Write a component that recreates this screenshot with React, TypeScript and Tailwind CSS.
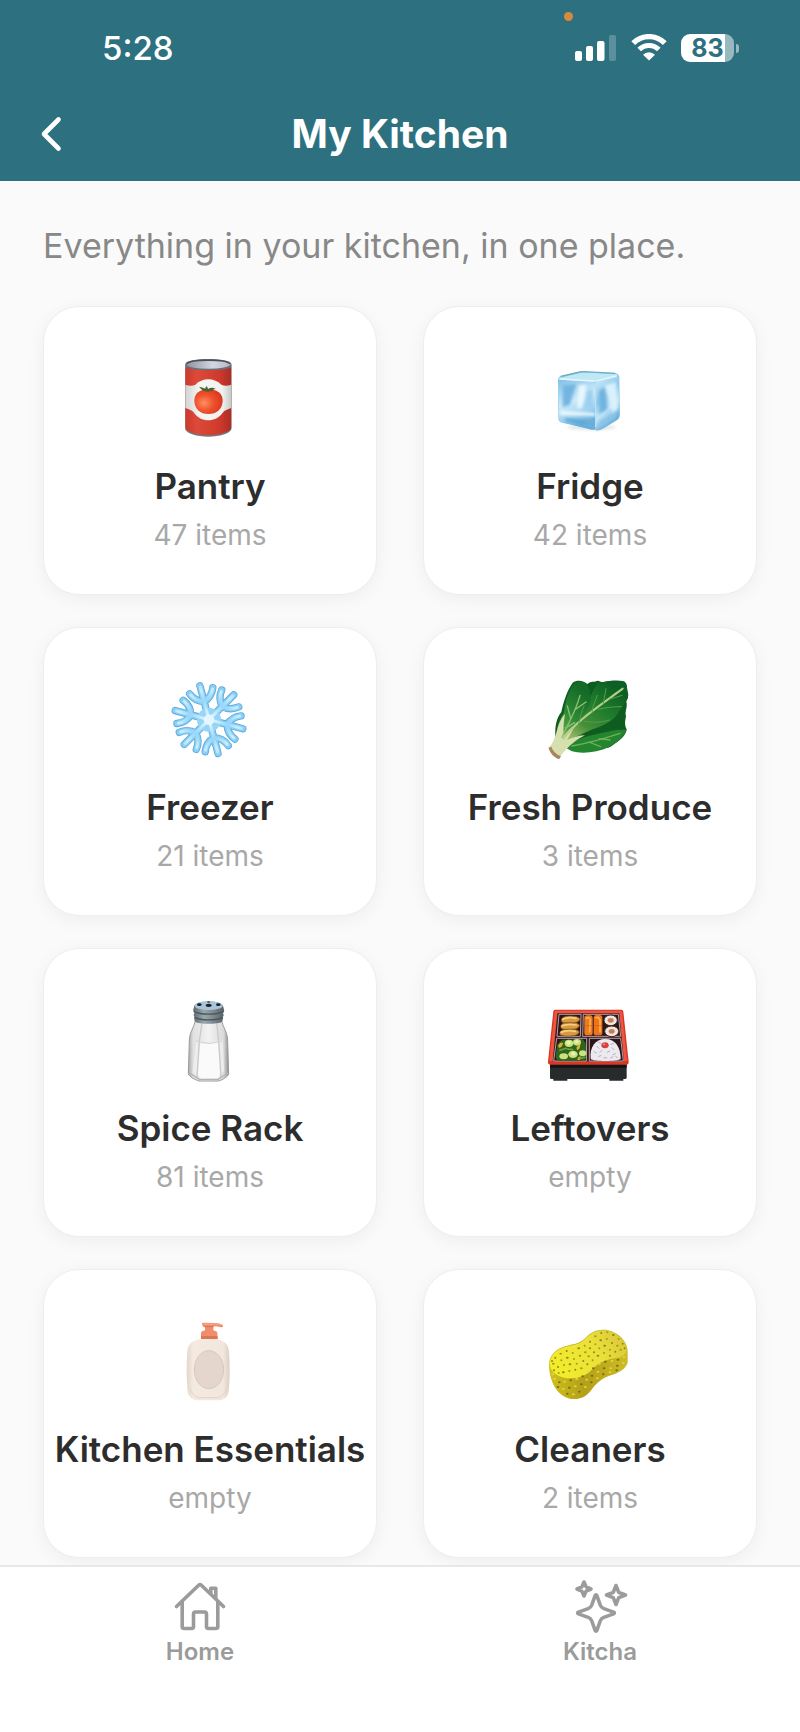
import type { ReactNode } from 'react'

type Category = {
  name: string
  count: string
  icon: ReactNode
}

function CanIcon() {
  return (
    <svg viewBox="-7 3 288 288" className="size-24" aria-hidden="true">
      <defs>
        <linearGradient id="canRed" x1="0" x2="1">
          <stop offset="0" stopColor="#c93a2e" />
          <stop offset="0.25" stopColor="#dd4a38" />
          <stop offset="0.75" stopColor="#cf392c" />
          <stop offset="1" stopColor="#a92e26" />
        </linearGradient>
        <linearGradient id="canLabel" x1="0" x2="1">
          <stop offset="0" stopColor="#cfd3d2" />
          <stop offset="0.3" stopColor="#f6f6f4" />
          <stop offset="0.8" stopColor="#f1f2f0" />
          <stop offset="1" stopColor="#c2c9c7" />
        </linearGradient>
        <linearGradient id="canLid" x1="0" x2="1">
          <stop offset="0" stopColor="#8f939e" />
          <stop offset="0.6" stopColor="#d3d7e2" />
          <stop offset="1" stopColor="#b5b9c6" />
        </linearGradient>
        <radialGradient id="tomato" cx="0.35" cy="0.55" r="0.7">
          <stop offset="0" stopColor="#ff9161" />
          <stop offset="0.45" stopColor="#f0532f" />
          <stop offset="1" stopColor="#d5331c" />
        </radialGradient>
      </defs>
      <path d="M63 42v196c4 13 34 22 69 22s65-9 69-22V42z" fill="#77747c" />
      <path d="M63 50v184c6 13 35 21 69 21s63-8 69-21V50c-10 12-128 12-138 0z" fill="url(#canRed)" />
      <path d="M63 104c14 5 22 4 30 0 20-22 58-22 78 0 8 4 18 4 30 0v70c-12 5-20 6-26 14-20 30-66 30-86 0-6-8-14-9-26-14z" fill="url(#canLabel)" />
      <path d="M90 152c0-22 16-34 42-34s43 12 43 34c0 24-18 40-43 40-24 0-42-16-42-40z" fill="url(#tomato)" />
      <path d="M133 126c-10-1-18-4-22-8l-7-8c9 2 14 4 19 6 0-4 2-6 5-7l3 8c8-4 15-5 23 0-7 1-11 4-13 8l-6-4z" fill="#47652b" />
      <path d="M63 42c0-20 138-20 138 0v8c-8 14-130 14-138 0z" fill="#6c6f79" />
      <ellipse cx="132" cy="43" rx="66" ry="13" fill="url(#canLid)" />
      <path d="M68 42c8-15 120-15 128 0" fill="none" stroke="#4b4e58" strokeWidth="4" />
    </svg>
  )
}

function IceIcon() {
  return (
    <svg viewBox="6 3 288 288" className="size-24" aria-hidden="true">
      <defs>
        <linearGradient id="iceLeft" x1="0" y1="0" x2="0.3" y2="1">
          <stop offset="0" stopColor="#7fc0e8" />
          <stop offset="0.5" stopColor="#cfeafa" />
          <stop offset="0.75" stopColor="#a3d5f2" />
          <stop offset="1" stopColor="#6aaedb" />
        </linearGradient>
        <linearGradient id="iceRight" x1="0" y1="0" x2="0.4" y2="1">
          <stop offset="0" stopColor="#d6effb" />
          <stop offset="0.45" stopColor="#8cc8eb" />
          <stop offset="0.7" stopColor="#c2e5f7" />
          <stop offset="1" stopColor="#5fa5d3" />
        </linearGradient>
        <filter id="iceBlur" x="-30%" y="-30%" width="160%" height="160%">
          <feGaussianBlur stdDeviation="4" />
        </filter>
      </defs>
      <ellipse cx="155" cy="232" rx="74" ry="9" fill="#e4e8ea" filter="url(#iceBlur)" />
      <path d="M54 90q0-9 9-12l52-12q6-2 14-1l96 4q12 2 13 13l2 112q0 10-8 16l-44 27q-8 5-18 4L66 218q-11-2-11-13z" fill="#8fcaec" />
      <path d="M56 88l102 5q8 2 8 10v134q-5 3-12 2L66 217q-9-2-9-12z" fill="url(#iceLeft)" />
      <path d="M166 100q2-6 12-8l50-13q8 1 8 10l2 106q0 8-6 13l-46 29q-9 5-20 4z" fill="url(#iceRight)" />
      <path d="M60 84l60-16q6-2 12-1l96 6q8 3 0 6l-50 13q-8 3-16 2L66 89q-10-1-6-5z" fill="#bfe8f5" />
      <g filter="url(#iceBlur)">
        <path d="M68 106l40-4-18 62-22 8z" fill="#73b5e0" />
        <path d="M116 106l24-2-14 68-14 6z" fill="#e9f7fe" />
        <path d="M60 182l106 7v9l-106-4z" fill="#eefaff" />
        <path d="M74 204l72 8-20 14-48-12z" fill="#5fa8d5" />
        <path d="M194 106l34-10 6 78-16 16z" fill="#d9f1fc" />
        <path d="M178 122l18-10 6 66-24 14z" fill="#6fb4df" />
        <path d="M180 214l50-24-2 14-46 28z" fill="#85c4e8" />
        <path d="M140 122l18-4v56l-26 2z" fill="#9bd0ef" />
      </g>
      <path d="M58 87l102 6q8 1 16-2l54-13" fill="none" stroke="#e6f8fd" strokeWidth="4" />
      <path d="M62 79l58-13q6-1 12-1l94 5" fill="none" stroke="#6faac4" strokeWidth="4" />
      <path d="M167 100v132" stroke="#b9e0f4" strokeWidth="4" />
    </svg>
  )
}

const ARMS = [-15, 45, 105, 165, 225, 285]
const ARM_PATH = 'M0 0V-105M0-56Q-26-64-36-90M0-56Q26-64 36-90'

function SnowflakeIcon() {
  return (
    <svg viewBox="37 36 288 288" className="size-24" aria-hidden="true">
      <defs>
        <radialGradient id="flake" gradientUnits="userSpaceOnUse" cx="0" cy="0" r="118">
          <stop offset="0" stopColor="#f1fbff" />
          <stop offset="0.25" stopColor="#c3eafd" />
          <stop offset="0.5" stopColor="#97d6f9" />
          <stop offset="0.75" stopColor="#caedfd" />
          <stop offset="1" stopColor="#a9def9" />
        </radialGradient>
      </defs>
      <g transform="translate(178 179)" fill="none" strokeLinecap="round" strokeLinejoin="round">
        {ARMS.map(a => (
          <path key={a} d={ARM_PATH} transform={`rotate(${a})`} stroke="#5fa9d8" strokeWidth="22" />
        ))}
        {ARMS.map(a => (
          <path key={a} d={ARM_PATH} transform={`rotate(${a})`} stroke="#89cff7" strokeWidth="17" />
        ))}
        <circle r="36" fill="#97d5f8" />
        {ARMS.map(a => (
          <path key={a} d="M0 0V-101M0-56Q-24-64-34-86M0-56Q24-64 34-86" transform={`rotate(${a})`} stroke="url(#flake)" strokeWidth="9" />
        ))}
        <circle r="16" fill="#e4f6ff" />
      </g>
    </svg>
  )
}

function LeafIcon() {
  return (
    <svg viewBox="36 36 288 288" className="size-24" aria-hidden="true">
      <defs>
        <linearGradient id="leaf" x1="0.1" y1="0.9" x2="0.8" y2="0.1">
          <stop offset="0" stopColor="#a3bd6c" />
          <stop offset="0.3" stopColor="#458f38" />
          <stop offset="0.65" stopColor="#1f7c2d" />
          <stop offset="1" stopColor="#0d6023" />
        </linearGradient>
        <linearGradient id="leafSide" x1="0" y1="1" x2="0.5" y2="0">
          <stop offset="0" stopColor="#7fb554" />
          <stop offset="0.5" stopColor="#2c8a35" />
          <stop offset="1" stopColor="#136b27" />
        </linearGradient>
      </defs>
      <path d="M78 240c-6-30 0-66 16-84 6-30 18-66 34-88 14-10 34-6 44 4 12-10 20-4 26-8 8-6 14 4 22 2 18-4 44-6 62-2 12 8 8 22 12 34 4 16-8 20-4 32 2 14-6 26-2 38-2 14-6 24 2 40-2 20-24 36-40 46-12 12-30 10-44 14-24 12-56 6-78 4z" fill="#0e5c20" />
      <path d="M92 252c20-52 50-86 78-112 8-24 22-56 34-72 26-4 64-4 84 2 4 14 4 32 6 44-10 18-20 30-30 46-16 26-46 38-76 48-30 12-60 30-96 44z" fill="url(#leaf)" />
      <path d="M80 238c-4-32 10-60 22-80 4-34 14-68 32-88 14-8 32-6 42 12 10 22 8 50-6 70-18 28-44 52-68 84z" fill="url(#leafSide)" />
      <path d="M104 262c30-26 74-34 106-42 26-6 54-14 80-10-12 24-32 40-52 50-36 18-82 22-112 14z" fill="#23852f" />
      <path d="M55 264c14-12 20-32 26-52 8-30 18-44 24-50-4 24-6 44-4 66 10-14 20-24 34-34-8 20-18 34-24 46 22-8 38-14 54-14-20 10-48 28-76 66-10 6-28-10-34-28z" fill="#d5e0ae" />
      <path d="M100 236c36-50 96-90 178-150" fill="none" stroke="#b4cf88" strokeWidth="6" strokeLinecap="round" />
      <path d="M96 232c18-42 40-74 54-126M122 176l-10-38M136 148l32-22M106 204l28-16" fill="none" stroke="#8fc070" strokeWidth="4" strokeLinecap="round" />
      <path d="M146 190c6-20 8-34 16-52M186 156c2-20 10-32 16-50M220 130l8-44M162 184c28 4 52 4 76-4M204 148c24-6 48-8 70-8M238 118l38-12" fill="none" stroke="#559e4b" strokeWidth="3" strokeLinecap="round" />
      <path d="M126 258c44-8 96-22 144-38M176 246l36 14M208 236l32 4" fill="none" stroke="#6fb157" strokeWidth="4" strokeLinecap="round" />
      <path d="M56 263c4 16 18 32 32 34l5-9c-14-4-25-16-29-28z" fill="#a8855b" />
    </svg>
  )
}

function ShakerIcon() {
  return (
    <svg viewBox="38 36 288 288" className="size-24" aria-hidden="true">
      <defs>
        <linearGradient id="glass" x1="0" x2="1">
          <stop offset="0" stopColor="#a9a9a9" />
          <stop offset="0.12" stopColor="#e0e0e0" />
          <stop offset="0.5" stopColor="#f2f2f2" />
          <stop offset="0.88" stopColor="#d9d9d9" />
          <stop offset="1" stopColor="#8d8d8d" />
        </linearGradient>
        <linearGradient id="cap" x1="0" x2="1">
          <stop offset="0" stopColor="#606b70" />
          <stop offset="0.35" stopColor="#9aa7ab" />
          <stop offset="0.65" stopColor="#7d898e" />
          <stop offset="1" stopColor="#556066" />
        </linearGradient>
      </defs>
      <path d="M138 118c-4 22-18 36-18 62l-3 98c0 8 24 20 32 22h58c10-2 31-14 31-22l-3-98c0-26-14-40-18-62z" fill="url(#glass)" stroke="#9b9b9b" strokeWidth="3" />
      <path d="M140 182l80-4 4 90-16 26h-52l-26-18z" fill="#ededec" />
      <path d="M152 190l-8 88 12 16 50-2 8-20-8-86z" fill="#fafafa" />
      <path d="M158 126l-8 54-7 110M202 126l6 54 7 108" fill="none" stroke="#c9c9c9" strokeWidth="4" />
      <path d="M140 180l40 8 38-8" fill="none" stroke="#d3d3d3" strokeWidth="3" />
      <path d="M120 276l30 19h56l30-19" fill="none" stroke="#b3b3b3" strokeWidth="4" />
      <path d="M134 78c0-22 88-22 88 0l2 8c2 6-2 8-4 10 4 4 4 8 0 12 2 6 0 10-2 14-12 8-68 8-80 0-3-4-4-8-2-14-4-4-4-8 0-12-3-3-5-6-4-11z" fill="url(#cap)" />
      <path d="M134 92c20 10 68 10 88 0M135 109c20 10 66 10 86 0" fill="none" stroke="#4c575d" strokeWidth="4" />
      <ellipse cx="178" cy="74" rx="42" ry="13" fill="#a9c3d9" />
      <ellipse cx="178" cy="73" rx="9" ry="5" fill="#16232d" />
      <ellipse cx="150" cy="71" rx="7" ry="4" fill="#16232d" />
      <ellipse cx="207" cy="71" rx="7" ry="4" fill="#16232d" />
      <ellipse cx="178" cy="63" rx="5" ry="2" fill="#2c3c48" />
    </svg>
  )
}

function BentoIcon() {
  return (
    <svg viewBox="36 6 288 288" className="size-24" aria-hidden="true">
      <path d="M60 214h230v46q0 4-5 4h-5v5h-42v-5H112v5H70v-5h-6q-4 0-4-4z" fill="#272b2c" />
      <path d="M60 218h230v12H60z" fill="#121415" />
      <path d="M74 56h200q5 0 6 6l16 150q1 9-8 9H62q-9 0-8-9L70 61q1-5 4-5z" fill="#d93726" />
      <path d="M77 59h194q4 0 5 5l15 146H58L74 63q1-4 3-4z" fill="#ee5540" />
      <path d="M82 67h186l14 144H68z" fill="#3b1c1c" />
      <path d="M87 70h66l-2 66H81zM160 70h105l7 66H158zM80 142h90l-1 68H71zM178 142h94l8 68H178z" fill="#2c1516" stroke="#b3a0a8" strokeWidth="3" strokeLinejoin="round" />
      <g fill="#d79a42" stroke="#8c551b" strokeWidth="2">
        <path d="M94 89q0-14 26-14t30 9q-4 13-30 13-26 0-26-8zM92 108q0-14 26-14t31 9q-4 13-31 13-26 0-26-8zM89 128q0-14 28-14t31 9q-4 12-31 12-28 0-28-7z" />
      </g>
      <path d="M98 85q16-8 40-3M96 105q16-8 42-3M94 124q16-8 42-3" fill="none" stroke="#f4d07b" strokeWidth="5" strokeLinecap="round" />
      <rect x="163" y="73" width="25" height="60" rx="8" fill="#f07a20" />
      <rect x="191" y="72" width="26" height="61" rx="8" fill="#ee7419" />
      <path d="M169 82q8-5 12 4l-2 36M198 80q8-3 12 6v36" fill="none" stroke="#ffb252" strokeWidth="5" strokeLinecap="round" />
      <path d="M164 104h23M192 104h24" stroke="#d05f18" strokeWidth="2" />
      <ellipse cx="242" cy="88" rx="20" ry="16" fill="#f0e6de" stroke="#392626" strokeWidth="3" />
      <ellipse cx="245" cy="121" rx="21" ry="16" fill="#f0e6de" stroke="#392626" strokeWidth="3" />
      <ellipse cx="242" cy="88" rx="9" ry="7" fill="#db735a" />
      <ellipse cx="245" cy="121" rx="9" ry="7" fill="#db735a" />
      <path d="M240 88h7M243 121h7" stroke="#7aa34a" strokeWidth="5" />
      <path d="M82 162q10-20 26-16l48-2q12 6 12 26v34q-10 8-30 5H90q-14 0-13-16z" fill="#2f641f" />
      <g fill="#cbe07e">
        <ellipse cx="117" cy="157" rx="13" ry="11" />
        <ellipse cx="141" cy="154" rx="12" ry="10" />
        <ellipse cx="129" cy="190" rx="14" ry="11" />
        <ellipse cx="158" cy="187" rx="11" ry="9" />
        <ellipse cx="101" cy="196" rx="13" ry="9" />
      </g>
      <g fill="#e7f3ac">
        <ellipse cx="116" cy="155" rx="7" ry="6" />
        <ellipse cx="130" cy="188" rx="7" ry="6" />
        <ellipse cx="140" cy="152" rx="6" ry="5" />
      </g>
      <path d="M84 164q8-13 15-8-1 12-11 15zM139 171q4-11 12-9-1 13-9 16zM142 206q2-12 11-9-1 9-5 11z" fill="#e8af2e" />
      <path d="M90 178l18-6M112 174l16 2M150 202l14-3" stroke="#6aa23c" strokeWidth="5" strokeLinecap="round" />
      <path d="M182 204c-4-36 14-60 44-60s46 24 46 60c-8 8-82 8-90 0z" fill="#eceaf0" />
      <path d="M192 182l7 4M201 166l6 6M216 178l-6 6M232 184l7-4M246 170l6 6M256 188l-7 3M206 196l7-2M222 200l8 1M242 201l7-4M250 158l-7 2M206 154l6 3M262 200l-5-4" stroke="#b3acbc" strokeWidth="3" strokeLinecap="round" />
      <ellipse cx="225" cy="163" rx="11" ry="9" fill="#d6413b" />
      <ellipse cx="222" cy="160" rx="4" ry="3" fill="#f0817a" />
    </svg>
  )
}

function SoapIcon() {
  return (
    <svg viewBox="38 39 288 288" className="size-24" aria-hidden="true">
      <defs>
        <linearGradient id="bottle" x1="0" x2="1">
          <stop offset="0" stopColor="#e3d6cb" />
          <stop offset="0.15" stopColor="#f4eae0" />
          <stop offset="0.85" stopColor="#f2e7dd" />
          <stop offset="1" stopColor="#dccfc4" />
        </linearGradient>
      </defs>
      <path d="M152 114c-24 4-36 16-38 38-3 40-3 80 1 118 2 16 14 28 30 28h64c16 0 27-12 29-28 4-38 4-78 1-118-2-22-14-34-36-38z" fill="url(#bottle)" />
      <path d="M122 262c6 18 14 26 28 28h54c14-2 22-10 28-28" fill="none" stroke="#e2d3c7" strokeWidth="3" />
      <ellipse cx="179" cy="206" rx="44" ry="57" fill="#e5d6cd" stroke="#d8c9bf" strokeWidth="3" />
      <path d="M155 96q0-4 4-5l8-3V79h-3q-4-1-5-7l-1-5q0-2 4-2l35 1q14 0 22 5 4 4 1 7-3 2-9 0-5-3-19-2v12l8 3q4 1 4 5l1 18h-50z" fill="#f08e6c" />
      <path d="M155 105h49l1 9h-50z" fill="#dd7654" />
      <path d="M167 77h26" stroke="#d97450" strokeWidth="3" />
      <path d="M162 69h36q10 0 16 3" fill="none" stroke="#f9ab8f" strokeWidth="3" />
    </svg>
  )
}

const PORES = [
  [92, 128], [110, 120], [128, 126], [146, 112], [164, 104], [180, 92], [196, 76], [214, 66], [232, 64], [250, 72],
  [266, 84], [278, 98], [262, 104], [246, 96], [230, 84], [212, 88], [196, 100], [180, 112], [166, 124], [150, 134],
  [132, 144], [112, 140], [94, 148], [76, 140], [70, 158], [84, 168], [102, 162], [120, 160], [140, 158], [160, 150],
  [176, 136], [192, 124], [208, 112], [224, 104], [240, 116], [256, 122], [272, 116], [284, 112], [222, 126], [204, 134],
  [188, 148], [172, 160], [154, 172], [136, 176], [118, 180], [100, 184], [86, 186], [72, 178], [66, 150], [240, 134],
] as const

const SIDE_PORES = [
  [74, 204], [88, 214], [104, 212], [122, 208], [140, 204], [158, 196], [174, 184], [190, 172], [208, 158], [226, 152],
  [246, 150], [264, 146], [282, 138], [84, 228], [100, 234], [118, 230], [136, 226], [154, 220], [170, 206], [186, 194],
  [204, 182], [222, 172], [242, 172], [262, 164], [280, 156], [112, 248], [130, 250], [148, 242], [166, 228], [184, 214],
  [202, 202], [220, 190], [240, 184], [260, 178], [68, 190],
] as const

function SpongeIcon() {
  return (
    <svg viewBox="36 9 288 288" className="size-24" aria-hidden="true">
      <defs>
        <linearGradient id="spongeTop" x1="0" y1="0.6" x2="1" y2="0.2">
          <stop offset="0" stopColor="#f2ec2b" />
          <stop offset="0.6" stopColor="#eae03a" />
          <stop offset="1" stopColor="#d8c73a" />
        </linearGradient>
        <linearGradient id="spongeSide" x1="0" y1="0" x2="1" y2="0">
          <stop offset="0" stopColor="#cfc11e" />
          <stop offset="0.45" stopColor="#b3a018" />
          <stop offset="1" stopColor="#cebc26" />
        </linearGradient>
      </defs>
      <path d="M57 158c2-26 22-44 48-52 26-8 40-6 58-22 14-16 32-28 56-28 38 0 72 30 74 62v38c-8 20-28 30-48 36-26 8-40 20-56 38-14 22-32 34-56 34-44 0-76-44-76-106z" fill="url(#spongeSide)" />
      <path d="M59 158c2-24 20-42 46-50s42-6 60-24c14-15 32-26 54-26 36 0 68 28 71 58 0 14-14 22-36 26-28 4-46 12-64 30-18 20-38 30-68 30-36 0-62-18-63-44z" fill="url(#spongeTop)" />
      {PORES.map(([x, y], i) => (
        <ellipse key={i} cx={x} cy={y} rx={i % 3 === 0 ? 4 : 3} ry="3" fill={i % 2 ? '#8f8412' : '#a99b18'} />
      ))}
      {SIDE_PORES.map(([x, y], i) => (
        <ellipse key={i} cx={x} cy={y} rx="4" ry="3" fill={i % 2 ? '#7d6d12' : '#e4d63c'} />
      ))}
    </svg>
  )
}

const CATEGORIES: Category[] = [
  { name: 'Pantry', count: '47 items', icon: <CanIcon /> },
  { name: 'Fridge', count: '42 items', icon: <IceIcon /> },
  { name: 'Freezer', count: '21 items', icon: <SnowflakeIcon /> },
  { name: 'Fresh Produce', count: '3 items', icon: <LeafIcon /> },
  { name: 'Spice Rack', count: '81 items', icon: <ShakerIcon /> },
  { name: 'Leftovers', count: 'empty', icon: <BentoIcon /> },
  { name: 'Kitchen Essentials', count: 'empty', icon: <SoapIcon /> },
  { name: 'Cleaners', count: '2 items', icon: <SpongeIcon /> },
]

function StatusBar() {
  return (
    <div className="relative flex h-24 items-center justify-between pl-[102px] pr-[61px]">
      {/* Microphone-in-use dot */}
      <span className="absolute right-[227px] top-3 size-[9px] rounded-full bg-[#d58a3c]" />
      <span className="text-[33px] font-medium leading-10">5:28</span>
      <div className="flex items-center gap-[14px]">
        <svg width="42" height="28" viewBox="0 0 42 28" fill="currentColor" aria-hidden="true">
          <rect x="0" y="17" width="7" height="10" rx="2" />
          <rect x="11" y="12" width="7" height="15" rx="2" />
          <rect x="22" y="7" width="7.5" height="20" rx="2" />
          <rect x="34" y="1" width="7" height="26" rx="2" opacity="0.22" />
        </svg>
        <svg width="36" height="28" viewBox="0 0 36 28" fill="none" stroke="currentColor" aria-hidden="true">
          <path d="M2.2 9.2a22.3 22.3 0 0 1 31.6 0" strokeWidth="5.4" />
          <path d="M8.2 15.6a13.8 13.8 0 0 1 19.6 0" strokeWidth="5" />
          <path d="M18 26.600l-6-5.800a8.200 8.200 0 0 1 12 0z" fill="currentColor" stroke="none" />
        </svg>
        <div className="flex items-center gap-[2px]">
          <div className="flex h-7 w-[53px] items-center justify-center rounded-[9px] bg-linear-to-r from-white from-83% to-[#98b9c0] to-83% text-[25px] font-bold leading-7 text-[#2d7180]">
            83
          </div>
          <span className="h-[9px] w-[3px] rounded-r-full bg-[#98b9c0]" />
        </div>
      </div>
    </div>
  )
}

function HomeIcon() {
  return (
    <svg viewBox="0 0 60 60" className="size-[60px]" fill="none" stroke="currentColor" strokeWidth="3.6" strokeLinecap="round" strokeLinejoin="round" aria-hidden="true">
      <path d="M6.5 28.5 28.6 7.3q1.4-1.2 2.8 0L53.5 28.5" />
      <path d="M12.2 24v24.5q0 2 2 2h7.3q2 0 2-2V36q0-2 2-2h9q2 0 2 2v12.5q0 2 2 2h7.3q2 0 2-2V24" />
      <path d="M40.8 15.500V10.200h5V20.500" />
    </svg>
  )
}

function SparklesIcon() {
  return (
    <svg viewBox="0 0 60 60" className="size-[60px]" fill="none" stroke="currentColor" strokeWidth="3.6" strokeLinejoin="round" aria-hidden="true">
      <path d="M25.100 17.600q.9-1.600 1.800 0L30.200 27q.9 2.700 3.600 3.600l9.800 3.500q1.600.9 0 1.800l-9.800 3.500q-2.700.9-3.600 3.600l-3.300 9.400q-.9 1.600-1.800 0L21.800 43q-.9-2.700-3.600-3.600L8.400 35.900q-1.600-.9 0-1.800l9.800-3.500q2.700-.9 3.600-3.600z" />
      <path d="M14 4l2.100 4.900L21 11l-4.900 2.100L14 18l-2.100-4.900L7 11l4.900-2.100z" />
      <path d="M46 7.500l2.700 6.800L55.500 17l-6.800 2.700L46 26.500l-2.700-6.800L36.500 17l6.800-2.700z" />
    </svg>
  )
}

const TABS = [
  { label: 'Home', icon: <HomeIcon /> },
  { label: 'Kitcha', icon: <SparklesIcon /> },
]

export default function App() {
  return (
    <div className="flex min-h-screen flex-col bg-[#fafafa] font-['Inter',sans-serif]">
      <header className="bg-[#2d7180] text-white">
        <StatusBar />
        <div className="grid h-[85px] grid-cols-[80px_1fr_80px] items-start pt-3">
          <button type="button" aria-label="Back" className="flex h-[52px] items-center pl-10">
            <svg width="22" height="36" viewBox="0 0 22 36" fill="none" stroke="currentColor" strokeWidth="4.6" strokeLinecap="round" strokeLinejoin="round" aria-hidden="true">
              <path d="M18.5 3.500 4 18l14.500 14.500" />
            </svg>
          </button>
          <h1 className="text-center text-[39px] font-bold leading-[52px]">My Kitchen</h1>
        </div>
      </header>

      <main className="flex-1 px-[43px] pb-[7px] pt-[41px]">
        <p className="mb-9 text-[34px] leading-[48px] text-[#888888]">
          Everything in your kitchen, in one place.
        </p>
        <div className="grid grid-cols-2 gap-x-[46px] gap-y-8">
          {CATEGORIES.map(category => (
            <a
              key={category.name}
              href="#"
              className="flex flex-col items-center rounded-[36px] border border-[#eeeeee] bg-white pb-[41px] pt-11 shadow-[0_4px_18px_rgba(0,0,0,0.05)]"
            >
              {category.icon}
              <h2 className="mt-[17px] whitespace-nowrap text-[35px] font-semibold leading-[44px] text-[#2d2d2d]">
                {category.name}
              </h2>
              <p className="mt-[9px] text-[28px] leading-9 text-[#a8a8a8]">{category.count}</p>
            </a>
          ))}
        </div>
      </main>

      <nav className="grid h-[167px] grid-cols-2 border-t-2 border-[#e8e8e8] bg-white pt-[11px]">
        {TABS.map(tab => (
          <a key={tab.label} href="#" className="flex flex-col items-center text-[#9b9b9b]">
            {tab.icon}
            <span className="text-[24px] font-semibold leading-7">{tab.label}</span>
          </a>
        ))}
      </nav>
    </div>
  )
}
